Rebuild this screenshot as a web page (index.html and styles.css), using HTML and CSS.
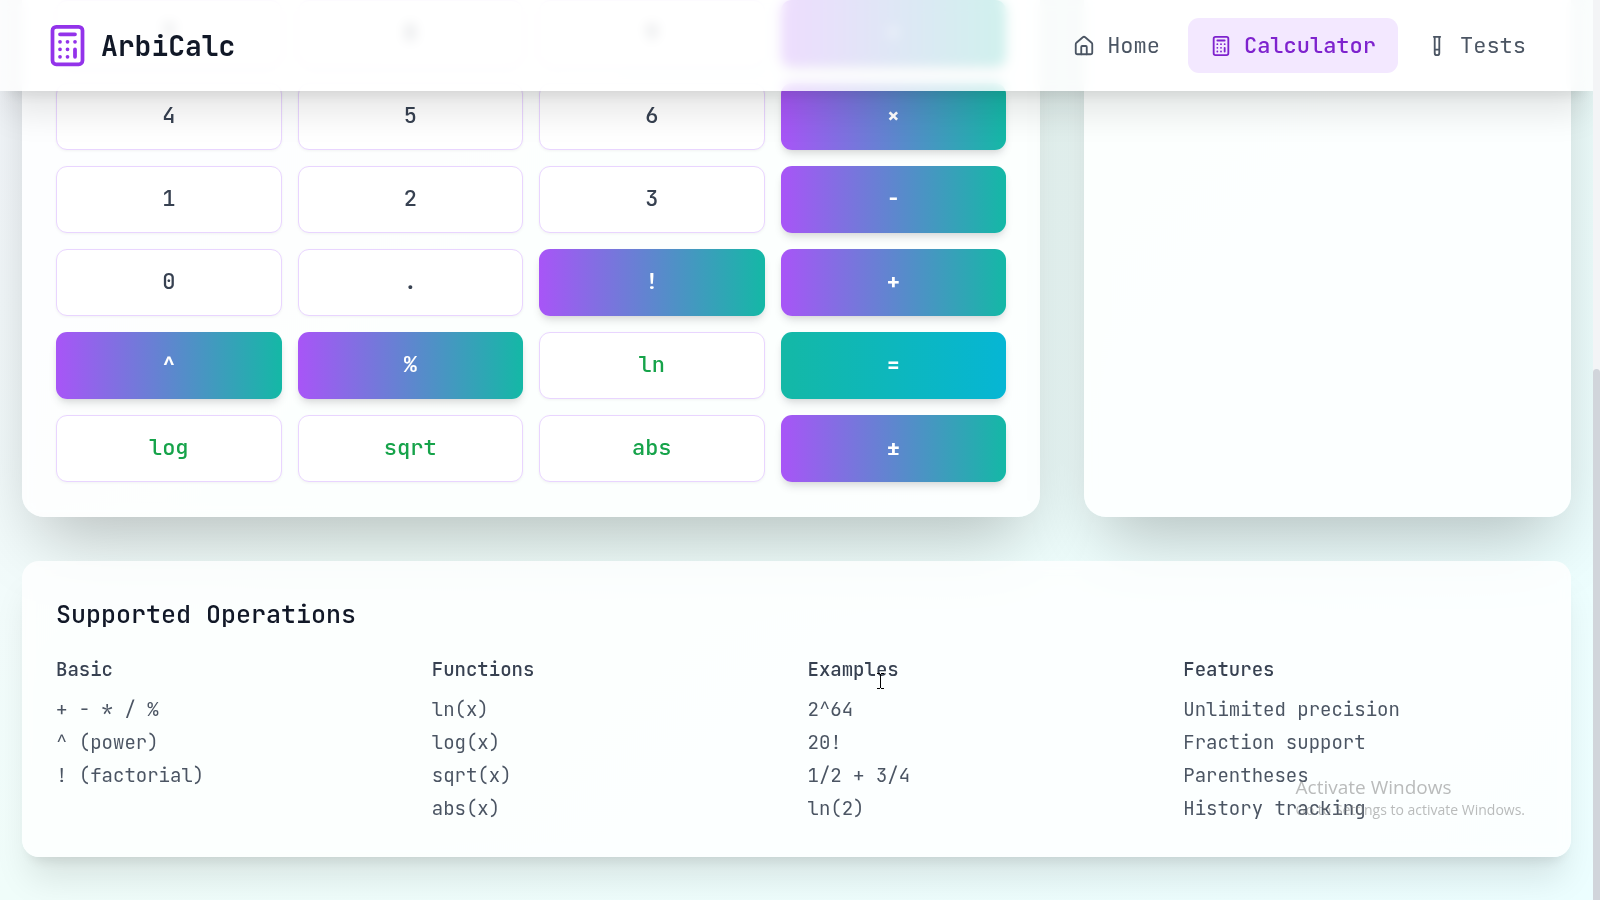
FILE: index.html
```html
<!DOCTYPE html>
<html lang="en">
<head>
<meta charset="utf-8">
<meta name="viewport" content="width=device-width, initial-scale=1">
<title>ArbiCalc</title>
<link rel="stylesheet" href="styles.css">
</head>
<body>
<svg class="sprite" aria-hidden="true">
  <symbol id="calc" viewBox="0 0 24 24">
    <rect width="16" height="20" x="4" y="2" rx="2"/>
    <path d="M8 6h8M16 14v4M16 10h.01M12 10h.01M8 10h.01M12 14h.01M8 14h.01M12 18h.01M8 18h.01"/>
  </symbol>
  <symbol id="house" viewBox="0 0 24 24">
    <path d="M15 21v-8a1 1 0 0 0-1-1h-4a1 1 0 0 0-1 1v8"/>
    <path d="M3 10a2 2 0 0 1 .709-1.528l7-5.999a2 2 0 0 1 2.582 0l7 5.999A2 2 0 0 1 21 10v9a2 2 0 0 1-2 2H5a2 2 0 0 1-2-2z"/>
  </symbol>
  <symbol id="tube" viewBox="0 0 24 24">
    <path d="M14.5 2v17.5c0 1.4-1.1 2.5-2.5 2.5s-2.5-1.1-2.5-2.5V2M8.5 2h7M14.5 16h-5"/>
  </symbol>
</svg>
<div class="app">
  <div class="page">
    <header class="header">
      <a class="brand" href="#"><svg class="icon icon-lg"><use href="#calc"/></svg><span>ArbiCalc</span></a>
      <nav class="nav">
        <a class="nav-link" href="#home"><svg class="icon"><use href="#house"/></svg>Home</a>
        <a class="nav-link active" href="#calculator"><svg class="icon"><use href="#calc"/></svg>Calculator</a>
        <a class="nav-link" href="#tests"><svg class="icon"><use href="#tube"/></svg>Tests</a>
      </nav>
    </header>
    <main class="content">
      <div class="panels">
        <section class="panel keypad">
          <button class="key">7</button><button class="key">8</button><button class="key">9</button><button class="key op">÷</button>
          <button class="key">4</button><button class="key">5</button><button class="key">6</button><button class="key op">×</button>
          <button class="key">1</button><button class="key">2</button><button class="key">3</button><button class="key op">-</button>
          <button class="key">0</button><button class="key">.</button><button class="key op">!</button><button class="key op">+</button>
          <button class="key op">^</button><button class="key op">%</button><button class="key fn">ln</button><button class="key op equals">=</button>
          <button class="key fn">log</button><button class="key fn">sqrt</button><button class="key fn">abs</button><button class="key op">±</button>
        </section>
        <section class="panel" aria-label="History"></section>
      </div>
      <section class="operations">
        <h2>Supported Operations</h2>
        <div class="columns">
          <div><h3>Basic</h3><ul><li>+ - * / %</li><li>^ (power)</li><li>! (factorial)</li></ul></div>
          <div><h3>Functions</h3><ul><li>ln(x)</li><li>log(x)</li><li>sqrt(x)</li><li>abs(x)</li></ul></div>
          <div><h3>Examples</h3><ul><li>2^64</li><li>20!</li><li>1/2 + 3/4</li><li>ln(2)</li></ul></div>
          <div><h3>Features</h3><ul><li>Unlimited precision</li><li>Fraction support</li><li>Parentheses</li><li>History tracking</li></ul></div>
        </div>
      </section>
    </main>
  </div>
  <div class="scrollbar"><div class="thumb"></div></div>
  <div class="watermark"><p class="watermark-title">Activate Windows</p><p>Go to Settings to activate Windows.</p></div>
  <svg class="cursor" viewBox="0 0 7 16" aria-hidden="true"><path d="M0 .5h3M4 .5h3M3.500 1v14M0 15.500h3M4 15.500h3"/></svg>
</div>
</body>
</html>
```
FILE: styles.css
```css
* { box-sizing: border-box; }

body {
  margin: 0;
  font-family: "JetBrains Mono", "DejaVu Sans Mono", monospace;
  color: #111827;
}

h2, h3, ul, p { margin: 0; padding: 0; }
ul { list-style: none; }
a { color: inherit; text-decoration: none; }

.sprite { position: absolute; width: 0; height: 0; }

.app {
  position: relative;
  display: flex;
  height: 100vh;
  overflow: hidden;
}

.page {
  position: relative;
  flex: 1;
  min-width: 0;
  display: flex;
  flex-direction: column;
  justify-content: flex-end;
  overflow: hidden;
  background: linear-gradient(to bottom right, #faf5ff, #f0fdfa, #ecfeff) bottom / 100% 1525px;
}

/* Header floats over the scrolled content */
.header {
  position: absolute;
  inset: 0 0 auto;
  z-index: 2;
  display: flex;
  align-items: center;
  justify-content: space-between;
  padding: 18px 45px;
  background: rgba(255, 255, 255, 0.8);
  backdrop-filter: blur(6px);
  box-shadow: 0 28px 35px -7px rgba(0, 0, 0, 0.1), 0 11px 14px -8px rgba(0, 0, 0, 0.1);
}

.brand {
  display: flex;
  align-items: center;
  gap: 11px;
  font-size: 28px;
  font-weight: 700;
  line-height: 36px;
}

.icon {
  width: 22px;
  height: 22px;
  fill: none;
  stroke: currentColor;
  stroke-width: 2;
  stroke-linecap: round;
  stroke-linejoin: round;
}

.icon-lg { width: 45px; height: 45px; color: #9333ea; }

.nav { display: flex; gap: 6px; }

.nav-link {
  display: flex;
  align-items: center;
  gap: 12px;
  height: 55px;
  padding: 0 22px;
  border-radius: 11px;
  font-size: 22px;
  color: #4b5563;
}

.nav-link.active { background: #f3e8ff; color: #7e22ce; font-weight: 500; }

.content {
  display: flex;
  flex-direction: column;
  gap: 44px;
  padding: 0 22px 43px;
}

.panels {
  display: grid;
  grid-template-columns: repeat(3, 1fr);
  gap: 44px;
}

.panel {
  border-radius: 22px;
  background: rgba(255, 255, 255, 0.8);
  backdrop-filter: blur(6px);
  box-shadow: 0 35px 70px -17px rgba(0, 0, 0, 0.25);
}

.keypad {
  grid-column: span 2;
  display: grid;
  grid-template-columns: repeat(4, 1fr);
  gap: 16px;
  padding: 120px 34px 35px;
}

.key {
  height: 67px;
  padding: 0 0 2px;
  border: 1px solid #e9d5ff;
  border-radius: 11px;
  background: #fff;
  box-shadow: 0 1px 3px rgba(0, 0, 0, 0.05);
  font: 500 22px "JetBrains Mono", "DejaVu Sans Mono", monospace;
  color: #374151;
}

.key.fn { color: #16a34a; }

.key.op {
  border: 0;
  background: linear-gradient(to right, #a855f7, #14b8a6);
  box-shadow: 0 6px 8px -1px rgba(0, 0, 0, 0.1), 0 3px 6px -3px rgba(0, 0, 0, 0.1);
  font-weight: 700;
  color: #fff;
}

.key.equals { background: linear-gradient(to right, #14b8a6, #06b6d4); }

.operations {
  position: relative;
  padding: 34px;
  border-radius: 17px;
  background: rgba(255, 255, 255, 0.8);
  backdrop-filter: blur(6px);
  box-shadow: 0 28px 35px -7px rgba(0, 0, 0, 0.1), 0 11px 14px -8px rgba(0, 0, 0, 0.1);
}

h2 {
  margin-bottom: 22px;
  font-size: 25px;
  font-weight: 500;
  line-height: 39px;
}

.columns {
  display: grid;
  grid-template-columns: repeat(4, 1fr);
  gap: 22px;
}

h3 {
  margin-bottom: 12px;
  font-size: 19px;
  font-weight: 500;
  line-height: 28px;
  color: #374151;
}

.columns ul {
  display: grid;
  gap: 5px;
  font-size: 19px;
  line-height: 28px;
  color: #4b5563;
}

.scrollbar {
  display: flex;
  align-items: flex-end;
  width: 7px;
  background: #f3f4f6;
}

.thumb {
  width: 100%;
  height: 59%;
  border-radius: 4px 4px 0 0;
  background: #d1d5db;
}

.watermark {
  position: absolute;
  right: 75px;
  bottom: 80px;
  z-index: 3;
  font: 14px/20px "Segoe UI", "Open Sans", sans-serif;
  color: rgba(120, 120, 120, 0.5);
}

.watermark-title { font-size: 19px; line-height: 25px; }

.cursor {
  position: absolute;
  left: 877px;
  top: 673px;
  z-index: 3;
  width: 7px;
  height: 16px;
  fill: none;
  stroke: #000;
}
```
